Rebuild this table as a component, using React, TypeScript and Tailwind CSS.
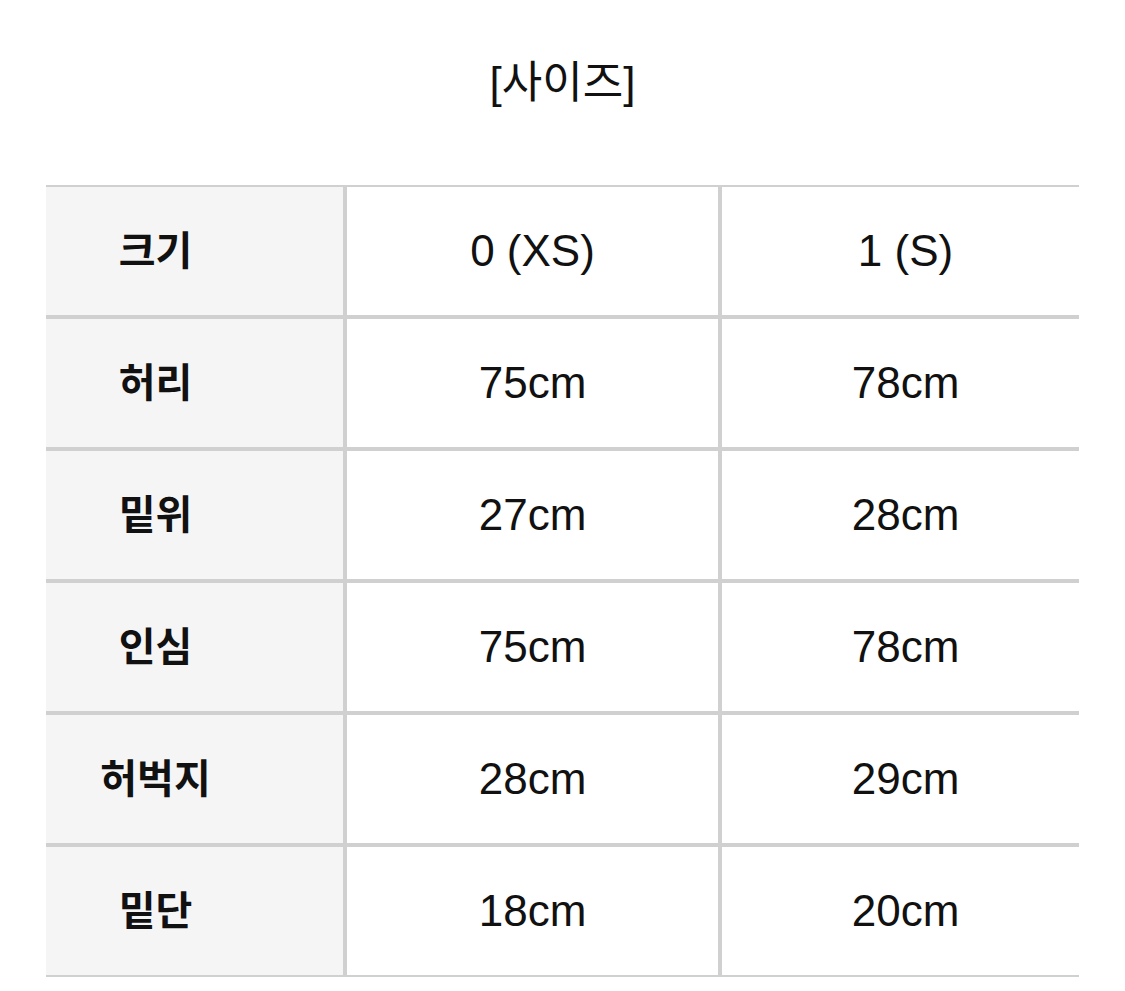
const rows: [string, string, string][] = [
  ["크기", "0 (XS)", "1 (S)"],
  ["허리", "75cm", "78cm"],
  ["밑위", "27cm", "28cm"],
  ["인심", "75cm", "78cm"],
  ["허벅지", "28cm", "29cm"],
  ["밑단", "18cm", "20cm"],
];

const font = { fontFamily: '"Liberation Sans", "Noto Sans CJK KR", sans-serif' };

export default function App() {
  return (
    <div className="min-h-screen w-[1125px] overflow-hidden bg-white text-[#111]" style={font}>
      {/* Title */}
      <div className="flex h-[185px] justify-center pt-[55px]">
        <h1 className="text-[44px] leading-[56px] font-normal">[사이즈]</h1>
      </div>

      {/* Size table */}
      <div className="mx-[46px] grid grid-cols-[297px_371px_1fr] gap-[4px] bg-[#d0d0d0] py-[2px]">
        {rows.map(([label, a, b]) => (
          <div key={label} className="contents">
            <div className="flex h-[128px] items-center justify-center bg-[#f5f5f5] pr-[78px] text-[40px] font-bold">
              {label}
            </div>
            <div className="flex h-[128px] items-center justify-center bg-white text-[44px]">{a}</div>
            <div className="flex h-[128px] items-center justify-center bg-white pl-[10px] text-[44px]">{b}</div>
          </div>
        ))}
      </div>
    </div>
  );
}
